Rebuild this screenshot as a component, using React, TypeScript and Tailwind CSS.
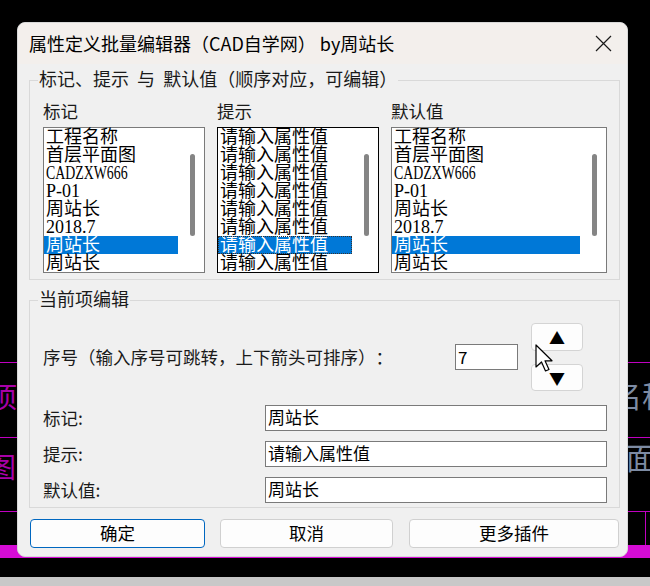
import { useState } from 'react';

const UI_FONT = { fontFamily: '"Noto Sans CJK SC", "Noto Sans", sans-serif' };
const LIST_FONT = { fontFamily: '"Liberation Serif", "Noto Sans CJK SC", serif' };

const TAGS = ['工程名称', '首层平面图', 'CADZXW666', 'P-01', '周站长', '2018.7', '周站长', '周站长'];
const PROMPTS = Array(8).fill('请输入属性值');

function ListBox({ items, selected, focused }: { items: string[]; selected: number; focused?: boolean }) {
  return (
    <div
      className={`flex h-[146px] bg-white border ${focused ? 'border-black' : 'border-[#7a7a7a]'}`}
      style={LIST_FONT}
    >
      <div className="flex-1 flex flex-col">
        {items.map((it, i) => (
          <div
            key={i}
            className={`h-[18px] leading-[18px] text-[18px] pl-[2px] whitespace-nowrap ${
              i === selected ? 'bg-[#0078d7] text-white' : 'text-black'
            } ${i === selected && focused ? 'outline outline-1 outline-dotted outline-[#333] -outline-offset-1' : ''}`}
          >
            {/^[A-Z]{3,}/.test(it) ? (
              <span className="inline-block origin-left scale-x-[0.77]">{it}</span>
            ) : (
              it
            )}
          </div>
        ))}
      </div>
      <div className="w-[26px] flex justify-center pl-[2px]">
        <div className="mt-[26px] w-[5px] h-[82px] rounded-full bg-[#858585]" />
      </div>
    </div>
  );
}

function Group({ title, className, children }: { title: string; className?: string; children: React.ReactNode }) {
  return (
    <div className={`relative border border-[#d9d9d9] ${className ?? ''}`}>
      <span className="absolute -top-[14px] left-[8px] px-[1px] bg-[#f0f0f0] leading-[22px] text-[18px] text-[#1a1a1a] whitespace-pre [text-spacing-trim:space-all]">
        {title}
      </span>
      {children}
    </div>
  );
}

function Field({ label, value }: { label: string; value: string }) {
  return (
    <div className="flex items-center h-[26px]">
      <span className="w-[222px] text-[17.5px] text-[#1a1a1a]">{label}</span>
      <div className="flex-1 h-[26px] bg-white border border-[#7a7a7a] px-[2px] pb-[2px] flex items-center text-[17px] text-black">
        {value}
      </div>
    </div>
  );
}

export default function App() {
  const [idx] = useState(6);

  return (
    <div className="relative w-[650px] h-[586px] bg-black overflow-hidden" style={UI_FONT}>
      {/* CAD drawing behind the dialog */}
      <div className="absolute left-0 right-0 top-[362px] h-px bg-[#c000c0]" />
      <div className="absolute left-0 right-0 top-[437px] h-px bg-[#c000c0]" />
      <div className="absolute left-0 right-0 top-[511px] h-px bg-[#c000c0]" />
      <div className="absolute left-[645px] top-[511px] h-[34px] w-px bg-[#c000c0]" />
      <div className="absolute left-0 right-0 top-[545px] h-[13px] bg-[#d60cd6]" />
      <div className="absolute left-0 right-0 top-[577px] h-[9px] bg-[#c8c8c8]" />
      <span className="absolute left-[-11px] top-[380px] text-[28px] leading-[32px] text-[#a800a8]">项</span>
      <span className="absolute left-[-12px] top-[450px] text-[28px] leading-[32px] text-[#a800a8]">图</span>
      <span className="absolute left-[612px] top-[378px] text-[30px] leading-[32px] text-[#7d8ba3] whitespace-nowrap">名称</span>
      <span className="absolute left-[626px] top-[440px] text-[30px] leading-[32px] text-[#7d8ba3]">面</span>

      {/* Dialog window */}
      <div className="absolute left-[17px] top-[22px] w-[611px] h-[535px] rounded-[8px] overflow-hidden bg-[#f0f0f0] border border-[#d8d8d8] flex flex-col">
        <div className="h-[41px] shrink-0 flex items-center justify-between pl-[11px] pr-[15px] bg-[#f3efec]">
          <span className="text-[18px] text-black whitespace-nowrap [text-spacing-trim:space-all]">
            属性定义批量编辑器（CAD自学网） by周站长
          </span>
          <svg width="17" height="17" viewBox="0 0 17 17">
            <path d="M1 1 L16 16 M16 1 L1 16" stroke="#1a1a1a" strokeWidth="1.2" />
          </svg>
        </div>

        <div className="flex flex-col pl-[11px] pr-[7px]">
          <Group title="标记、提示  与  默认值（顺序对应，可编辑）" className="mt-[16px]">
            <div className="pt-[19px] pb-[6px] pl-[13px] pr-[12px]">
              <div className="grid grid-cols-[162px_162px_216px] gap-x-[12px]">
                <span className="h-[22px] leading-[22px] text-[17.5px] text-[#1a1a1a]">标记</span>
                <span className="h-[22px] leading-[22px] text-[17.5px] text-[#1a1a1a]">提示</span>
                <span className="h-[22px] leading-[22px] text-[17.5px] text-[#1a1a1a]">默认值</span>
              </div>
              <div className="grid grid-cols-[162px_162px_216px] gap-x-[12px] mt-[5px]">
                <ListBox items={TAGS} selected={idx} />
                <ListBox items={PROMPTS} selected={idx} focused />
                <ListBox items={TAGS} selected={idx} />
              </div>
            </div>
          </Group>

          <Group title="当前项编辑" className="mt-[20px]">
            <div className="pt-[22px] pb-[4px] pl-[13px] pr-[12px] flex flex-col">
              <div className="flex items-center h-[68px]">
                <span className="w-[412px] text-[17.5px] text-[#1a1a1a] whitespace-nowrap [text-spacing-trim:space-all]">
                  序号（输入序号可跳转，上下箭头可排序）：
                </span>
                <div className="w-[63px] h-[26px] bg-white border border-[#7a7a7a] px-[2px] flex items-center text-[17px] text-black">
                  {idx + 1}
                </div>
                <div className="ml-[13px] w-[52px] flex flex-col">
                  <div className="h-[28px] rounded-[4px] bg-[#fdfdfd] border border-[#d4d4d4] flex items-center justify-center text-[16px] text-black">
                    ▲
                  </div>
                  <div className="mt-[13px] h-[27px] rounded-[4px] bg-[#fdfdfd] border border-[#d4d4d4] flex items-center justify-center text-[16px] text-black">
                    ▼
                  </div>
                </div>
              </div>
              <div className="mt-[14px] flex flex-col gap-[10px]">
                <Field label="标记:" value="周站长" />
                <Field label="提示:" value="请输入属性值" />
                <Field label="默认值:" value="周站长" />
              </div>
            </div>
          </Group>

          <div className="mt-[11px] flex pl-[1px]">
            <button className="w-[175px] h-[29px] rounded-[4px] bg-[#fdfdfd] border-[1.5px] border-[#0067c0] text-[17.5px] text-black">
              确定
            </button>
            <button className="ml-[15px] w-[173px] h-[29px] rounded-[4px] bg-[#fdfdfd] border border-[#d0d0d0] text-[17.5px] text-black">
              取消
            </button>
            <button className="ml-[16px] w-[210px] h-[29px] rounded-[4px] bg-[#fdfdfd] border border-[#d0d0d0] text-[17.5px] text-black">
              更多插件
            </button>
          </div>
        </div>
      </div>

      {/* mouse pointer */}
      <svg className="absolute left-[535px] top-[344px]" width="22" height="30" viewBox="0 0 22 30">
        <path d="M1 1 L1 23 L6.5 18 L10.5 27 L14 25.5 L10 16.8 L17 16.8 Z" fill="white" stroke="black" strokeWidth="1.2" strokeLinejoin="round" />
      </svg>
    </div>
  );
}
